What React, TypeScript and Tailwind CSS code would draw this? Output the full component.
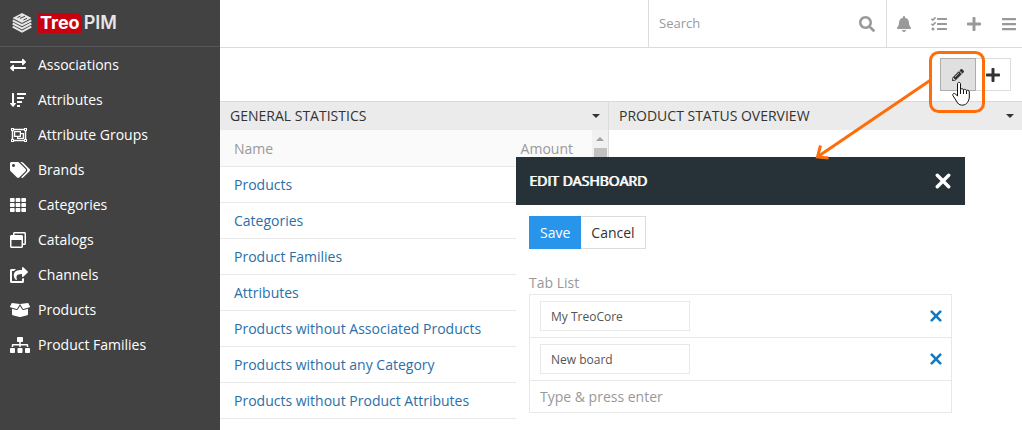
import type { ComponentType } from "react";
import {
  FaBars,
  FaBell,
  FaBoxOpen,
  FaExchangeAlt,
  FaPencilAlt,
  FaPlus,
  FaRegObjectGroup,
  FaRegWindowRestore,
  FaSearch,
  FaShareSquare,
  FaSitemap,
  FaSortAmountDown,
  FaTags,
  FaTasks,
  FaTh,
} from "react-icons/fa";

type Icon = ComponentType<{ className?: string }>;

const navItems: { label: string; icon: Icon; size: string }[] = [
  { label: "Associations", icon: FaExchangeAlt, size: "h-4 w-4" },
  { label: "Attributes", icon: FaSortAmountDown, size: "h-4 w-4" },
  { label: "Attribute Groups", icon: FaRegObjectGroup, size: "h-4 w-[18px]" },
  { label: "Brands", icon: FaTags, size: "h-4 w-5" },
  { label: "Categories", icon: FaTh, size: "h-4 w-4" },
  { label: "Catalogs", icon: FaRegWindowRestore, size: "h-4 w-4" },
  { label: "Channels", icon: FaShareSquare, size: "h-4 w-[18px]" },
  { label: "Products", icon: FaBoxOpen, size: "h-4 w-5" },
  { label: "Product Families", icon: FaSitemap, size: "h-4 w-5" },
];

const statistics = [
  "Products",
  "Categories",
  "Product Families",
  "Attributes",
  "Products without Associated Products",
  "Products without any Category",
  "Products without Product Attributes",
];

const tabs = ["My TreoCore", "New board"];

function Logo() {
  return (
    <a href="#" className="flex h-[47px] items-center border-b border-[#565656] pl-3">
      <svg viewBox="0 0 20 20" className="mr-1.5 size-5" aria-hidden="true">
        <path d="M10 0 19.5 5 10 10 .5 5Z" fill="#e6e6e6" />
        <path
          d="m5.500 4.600 3-1.500M8 5.400l5-2.200M11.500 7l3.500-1.800"
          fill="none"
          stroke="#424242"
          strokeWidth="1"
        />
        <path
          d="m.7 7.300 9.300 4.900 9.300-4.900M.7 10.500l9.300 4.900 9.300-4.900M.7 13.700l9.300 4.900 9.300-4.900"
          fill="none"
          stroke="#e6e6e6"
          strokeWidth="2"
        />
      </svg>
      <span className="flex items-center font-['Inter',sans-serif] text-[18px] leading-5 text-[#e6e6e6]">
        <span className="rounded-tr-md bg-[#c9000e] px-0.5 font-bold text-white">Treo</span>
        <span className="pl-0.5 font-semibold">PIM</span>
      </span>
    </a>
  );
}

function Cross({ className }: { className: string }) {
  return (
    <svg viewBox="0 0 14 14" className={className} aria-hidden="true">
      <path d="m2 2 10 10M12 2 2 12" fill="none" stroke="currentColor" strokeLinecap="round" />
    </svg>
  );
}

function Sidebar() {
  return (
    <aside className="w-[220px] shrink-0 bg-[#424242] text-white">
      <Logo />
      <nav>
        {navItems.map(({ label, icon: ItemIcon, size }) => (
          <a key={label} href="#" className="flex h-[35px] items-center pl-2.5">
            <span className="flex w-7">
              <ItemIcon className={size} />
            </span>
            {label}
          </a>
        ))}
      </nav>
    </aside>
  );
}

function TopBar() {
  return (
    <header className="flex h-12 justify-end border-b border-[#dcdcdc] text-[#999]">
      <div className="flex w-[239px] items-center border-x border-[#dcdcdc] pl-2.5 pr-[11px]">
        <input
          type="text"
          placeholder="Search"
          aria-label="Search"
          className="min-w-0 flex-1 text-[13px] outline-none placeholder:text-[#999]"
        />
        <button type="button" aria-label="Run search">
          <FaSearch className="size-4" />
        </button>
      </div>
      <div className="flex items-center gap-[19px] pl-[9px] pr-[5px]">
        <button type="button" aria-label="Notifications">
          <FaBell className="size-4" />
        </button>
        <button type="button" aria-label="Tasks">
          <FaTasks className="size-4" />
        </button>
        <button type="button" aria-label="Create">
          <FaPlus className="size-4" />
        </button>
        <button type="button" aria-label="Menu">
          <FaBars className="size-4" />
        </button>
      </div>
    </header>
  );
}

function PanelHeader({ title }: { title: string }) {
  return (
    <div className="flex h-[29px] items-center justify-between border-t border-[#d9d9d9] bg-[#ebebeb] pl-2.5 pr-2 text-[#333]">
      <h2>{title}</h2>
      <button type="button" aria-label={`${title} options`}>
        <svg viewBox="0 0 8 4" className="h-1 w-2" aria-hidden="true">
          <path d="M0 0h8L4 4Z" fill="currentColor" />
        </svg>
      </button>
    </div>
  );
}

function StatisticsPanel() {
  return (
    <section className="border-r border-[#dcdcdc]">
      <PanelHeader title="GENERAL STATISTICS" />
      <div className="flex">
        <table className="flex-1 border-collapse text-left">
          <thead>
            <tr className="h-9 border-b border-[#e8e8e8] bg-[#fafafa] text-[#999]">
              <th className="pl-3.5 pt-0.5 font-normal">Name</th>
              <th className="pr-[19px] pt-0.5 text-right font-normal">Amount</th>
            </tr>
          </thead>
          <tbody>
            {statistics.map((name) => (
              <tr key={name} className="h-9 border-b border-[#e8e8e8]">
                <td className="pl-3.5 pt-0.5" colSpan={2}>
                  <a href="#" className="text-[#2a6fa8]">
                    {name}
                  </a>
                </td>
              </tr>
            ))}
          </tbody>
        </table>
        <div className="flex w-4 flex-col items-center bg-[#f1f1f1]">
          <svg viewBox="0 0 8 4" className="my-[7px] h-1 w-2" aria-hidden="true">
            <path d="M4 0 8 4H0Z" fill="#a0a0a0" />
          </svg>
          <div className="h-24 w-[13px] bg-[#c1c1c1]" />
        </div>
      </div>
    </section>
  );
}

function EditDashboardDialog() {
  return (
    <div
      role="dialog"
      aria-label="Edit dashboard"
      className="absolute bottom-0 right-[57px] top-[157px] w-[449px] bg-white"
    >
      <div className="flex h-12 items-center justify-between bg-[#273238] px-3.5 pl-[13px] text-white">
        <h2 className="[text-shadow:1px_0_0_#fff]">EDIT DASHBOARD</h2>
        <button type="button" aria-label="Close">
          <Cross className="size-4 stroke-[3]" />
        </button>
      </div>
      <div className="px-[13px] pt-[11px]">
        <div className="flex">
          <button type="button" className="h-[33px] bg-[#2895ea] px-[11px] text-white">
            Save
          </button>
          <button type="button" className="h-[33px] border border-l-0 border-[#dcdcdc] px-2.5 text-[#333]">
            Cancel
          </button>
        </div>
        <label htmlFor="new-tab" className="mt-6 block pb-px leading-5 text-[#999]">
          Tab List
        </label>
        <ul className="border border-[#e8e8e8]">
          {tabs.map((tab) => (
            <li key={tab} className="flex h-[43px] items-center justify-between border-b border-[#e8e8e8] pl-2.5 pr-[9px]">
              <input
                type="text"
                defaultValue={tab}
                aria-label={`${tab} tab name`}
                className="h-[30px] w-[150px] border border-[#e8e8e8] px-2.5 text-xs text-[#555] outline-none"
              />
              <button type="button" aria-label={`Remove ${tab}`} className="text-[#1179bf]">
                <Cross className="size-3 stroke-[3]" />
              </button>
            </li>
          ))}
          <li className="flex h-[31px] items-center px-2.5">
            <input
              id="new-tab"
              type="text"
              placeholder="Type &amp; press enter"
              className="w-full outline-none placeholder:text-[#999]"
            />
          </li>
        </ul>
      </div>
    </div>
  );
}

function Callout() {
  return (
    <svg
      viewBox="0 0 222 130"
      className="pointer-events-none absolute right-0 top-10 h-[130px] w-[222px]"
      fill="none"
      aria-hidden="true"
    >
      <g stroke="#ff6d0a" strokeWidth="3">
        <rect x="130.500" y="12.500" width="53" height="59" rx="8" />
        <path d="M130 40.500 18 116.500M20.500 105.500 17.500 117 28.500 118" />
      </g>
      <path
        d="M157.500 44c0-2.200 3-2.200 3 0v5.500c.8-1.300 2.700-.9 3 .4.900-1 2.500-.6 2.800.6 1.200-.8 3-.2 3 1.500v5c0 2.500-1 4-1.800 5.300-1.600 3.400-7.700 3.900-9.800.7l-4.700-7.300c-1-1.800 1.200-3.100 2.700-1.600l1.800 2Z"
        fill="#fff"
        stroke="#111"
      />
      <path d="M160.500 49.500v4.500M163.500 50v4M166.500 51v3" stroke="#111" />
    </svg>
  );
}

export default function App() {
  return (
    <div className="relative flex min-h-screen bg-white font-['Open_Sans',sans-serif] text-sm">
      <Sidebar />
      <main className="min-w-0 flex-1">
        <TopBar />
        <div className="flex h-[53px] justify-end px-[11px] pt-2.5">
          <button
            type="button"
            aria-label="Edit dashboard"
            className="flex h-[33px] w-9 items-center justify-center border border-[#adadad] bg-[#e0e0e0] text-[#333]"
          >
            <FaPencilAlt className="size-3" />
          </button>
          <button
            type="button"
            aria-label="Add dashlet"
            className="flex h-[33px] w-[35px] items-center border border-l-0 border-[#dcdcdc] pl-[9px] text-[#333]"
          >
            <FaPlus className="size-4" />
          </button>
        </div>
        <div className="grid grid-cols-[389fr_413fr]">
          <StatisticsPanel />
          <section>
            <PanelHeader title="PRODUCT STATUS OVERVIEW" />
          </section>
        </div>
      </main>
      <EditDashboardDialog />
      <Callout />
    </div>
  );
}
